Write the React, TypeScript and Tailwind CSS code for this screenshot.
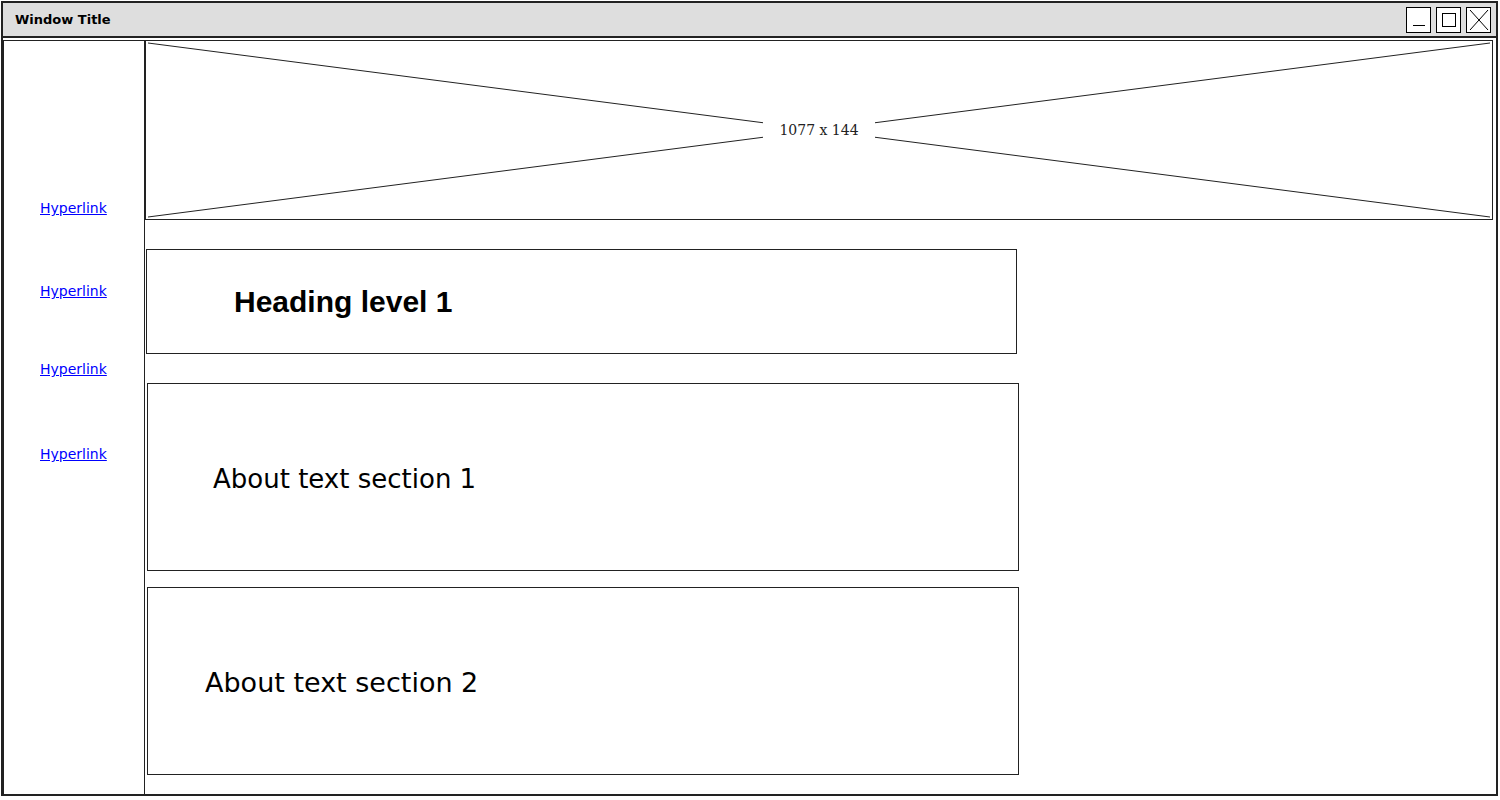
const sketch = { fontFamily: '"DejaVu Sans", sans-serif' };

function WinButton({ children }: { children: React.ReactNode }) {
  return (
    <div className="w-[25px] h-[26px] border border-black bg-white flex items-center justify-center">
      {children}
    </div>
  );
}

function Placeholder({ label }: { label: string }) {
  return (
    <div className="relative w-[1348px] h-[180px] border border-[#222] bg-white">
      <svg className="absolute inset-0 w-full h-full" viewBox="0 0 1346 178" preserveAspectRatio="none">
        <line x1="2" y1="2" x2="1344" y2="176" stroke="#222" strokeWidth="1" />
        <line x1="1344" y1="2" x2="2" y2="176" stroke="#222" strokeWidth="1" />
      </svg>
      <div className="absolute inset-0 flex items-center justify-center">
        <span className="bg-white px-4 py-1 text-[14px] text-[#222]" style={{ fontFamily: '"DejaVu Serif", serif' }}>
          {label}
        </span>
      </div>
    </div>
  );
}

export default function App() {
  const links = ['mt-[158px]', 'mt-[65px]', 'mt-[60px]', 'mt-[67px]'];

  return (
    <div className="w-[1500px] h-[800px] bg-white pt-[1px] pl-[1px]">
      <div className="w-[1497px] h-[795px] border-2 border-[#222] flex flex-col">
        <div className="h-[35px] bg-[#dedede] border-b-2 border-[#222] flex items-center justify-between pl-[12px] pr-[5px]">
          <span className="text-[13px] font-bold text-black" style={sketch}>Window Title</span>
          <div className="flex gap-[5px]">
            <WinButton>
              <div className="w-[12px] h-[1px] bg-black mt-[12px]" />
            </WinButton>
            <WinButton>
              <div className="w-[14px] h-[14px] border border-black" />
            </WinButton>
            <WinButton>
              <svg width="20" height="22" viewBox="0 0 20 22">
                <line x1="1" y1="1" x2="19" y2="21" stroke="black" strokeWidth="1" />
                <line x1="19" y1="1" x2="1" y2="21" stroke="black" strokeWidth="1" />
              </svg>
            </WinButton>
          </div>
        </div>

        <div className="flex flex-1 min-h-0">
          <div className="w-[142px] mt-[2px] border border-[#222] border-b-0 flex flex-col items-start pl-[36px]">
            {links.map((m, i) => (
              <a key={i} href="#" className={`${m} text-[14px] leading-[18px] text-[#0000ff] underline`} style={sketch}>
                Hyperlink
              </a>
            ))}
          </div>

          <div className="flex-1 flex flex-col pt-[2px]">
            <Placeholder label="1077 x 144" />

            <div className="mt-[29px] ml-[1px] w-[871px] h-[105px] border border-[#222] flex items-center pl-[87px]">
              <h1 className="text-[30px] font-bold text-black" style={{ fontFamily: '"Liberation Sans", Arial, sans-serif' }}>
                Heading level 1
              </h1>
            </div>

            <div className="mt-[29px] ml-[2px] w-[872px] h-[188px] border border-[#222] flex items-center pl-[65px] pt-[4px]">
              <p className="text-[26px] text-black" style={sketch}>About text section 1</p>
            </div>

            <div className="mt-[16px] ml-[2px] w-[872px] h-[188px] border border-[#222] flex items-center pl-[57px] pt-[4px]">
              <p className="text-[27px] text-black" style={sketch}>About text section 2</p>
            </div>
          </div>
        </div>
      </div>
    </div>
  );
}
